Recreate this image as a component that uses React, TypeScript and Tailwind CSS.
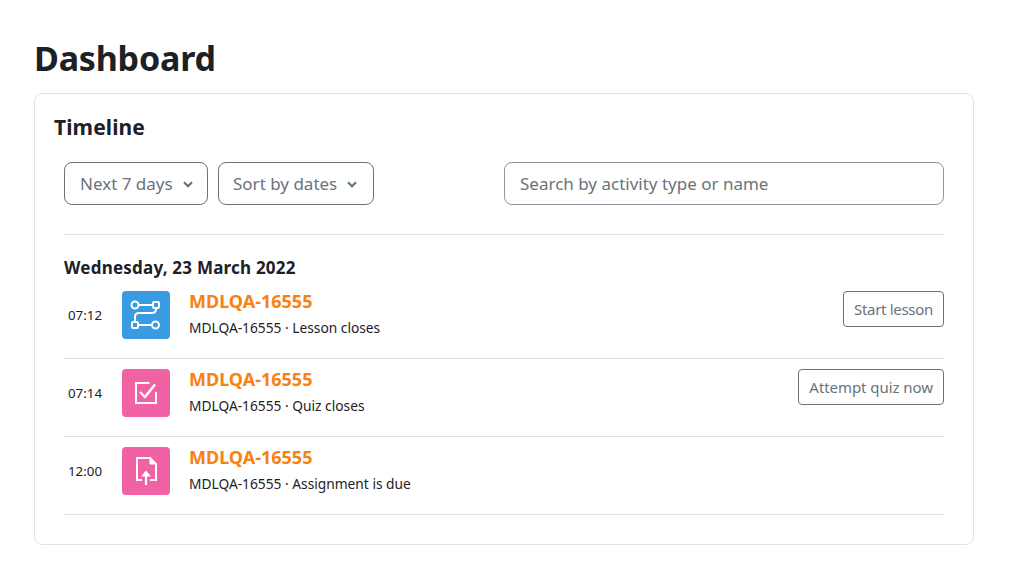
import React from 'react';

const Chevron = () => (
  <svg width="10" height="7" viewBox="0 0 10 7" fill="none" className="ml-[10px] mt-[1px]">
    <path d="M1 1.2 5 5.2 9 1.2" stroke="#6a737b" strokeWidth="2.2" />
  </svg>
);

const LessonIcon = () => (
  <svg width="32" height="32" viewBox="0 0 32 32" fill="none" stroke="white" strokeWidth="2">
    <circle cx="5" cy="6" r="3.5" />
    <rect x="23" y="3" width="6" height="6" rx="1" />
    <rect x="2" y="23" width="6" height="6" rx="1" />
    <circle cx="25.5" cy="26" r="3.5" />
    <path d="M8.5 6H23M26 9V10C26 12.5 24.5 14 22 14H9C6.5 14 5 15.5 5 18V23M8 26H22" />
  </svg>
);

const QuizIcon = () => (
  <svg width="32" height="32" viewBox="0 0 32 32" fill="none" stroke="white" strokeWidth="2">
    <path d="M19.5 6H6V26H26V15" />
    <path d="M10 15 15 20 25 7.5" strokeWidth="2.4" />
  </svg>
);

const AssignIcon = () => (
  <svg width="32" height="32" viewBox="0 0 32 32" fill="none" stroke="white" strokeWidth="2">
    <path d="M12 25H7V3H20L26 9V25H20" />
    <path d="M20 3V9H26Z" fill="white" strokeWidth="1" />
    <path d="M16 30V19" strokeWidth="2.2" />
    <path d="M16 15.5 21 21.5H11Z" fill="white" stroke="none" />
  </svg>
);

const events = [
  { time: '07:12', color: 'bg-[#399be2]', icon: <LessonIcon />, sub: 'MDLQA-16555 · Lesson closes', action: 'Start lesson', track: 'tracking-[-0.3px]' },
  { time: '07:14', color: 'bg-[#f062a4]', icon: <QuizIcon />, sub: 'MDLQA-16555 · Quiz closes', action: 'Attempt quiz now', track: 'tracking-[-0.06px]' },
  { time: '12:00', color: 'bg-[#f062a4]', icon: <AssignIcon />, sub: 'MDLQA-16555 · Assignment is due', action: '', track: '' },
];

export default function App() {
  return (
    <div className="h-[564px] bg-white px-[34px] pt-[35px] text-[#1d2125] font-['Noto_Sans','Open_Sans',sans-serif] overflow-hidden">
      <h1 className="h-[58px] text-[34px] leading-[46px] font-bold tracking-[-0.2px]">Dashboard</h1>
      <div className="w-[940px] h-[452px] border border-[#dee2e6] rounded-[8px] pl-[19px] pr-[19px] pt-[19px]">
        <h2 className="text-[21px] leading-[28px] font-bold tracking-[0.1px]">Timeline</h2>
        <div className="mx-[10px] mt-[21px]">
          <div className="flex h-[73px] border-b border-[#dee2e6]">
            <div className="flex h-[43px] w-[144px] items-center rounded-[8px] border border-[#6a737b] pl-[15px] text-[17px] text-[#6a737b]">
              Next 7 days
              <Chevron />
            </div>
            <div className="ml-[10px] flex h-[43px] w-[156px] items-center rounded-[8px] border border-[#6a737b] pl-[14px] text-[17px] text-[#6a737b]">
              Sort by dates
              <Chevron />
            </div>
            <div className="ml-auto flex h-[43px] w-[440px] items-center rounded-[8px] border border-[#8f959e] pl-[15px] text-[17px] text-[#6a737b]">
              Search by activity type or name
            </div>
          </div>
          <h5 className="mt-[21px] h-[25px] text-[17px] leading-[24px] font-bold tracking-[0.22px]">Wednesday, 23 March 2022</h5>
          {events.map((e) => (
            <div key={e.time} className="flex h-[78px] border-b border-[#dee2e6] pt-[10px] first:h-[68px] first:border-b-0">
              <div className="w-[58px] pl-[4px] pt-[14px] text-[13.3px] leading-[20px]">{e.time}</div>
              <div className={`flex h-[48px] w-[48px] items-center justify-center rounded-[4px] ${e.color}`}>{e.icon}</div>
              <div className="ml-[19px] flex-1 -mt-[2px]">
                <div className="text-[18px] leading-[24px] font-bold text-[#f98012]">MDLQA-16555</div>
                <div className="mt-[5px] text-[13.75px] leading-[20px]">{e.sub}</div>
              </div>
              {e.action && (
                <div className={`flex h-[36px] items-center rounded-[4px] border border-[#6a737b] px-[10px] text-[15px] text-[#6a737b] ${e.track}`}>
                  {e.action}
                </div>
              )}
            </div>
          ))}
        </div>
      </div>
    </div>
  );
}
